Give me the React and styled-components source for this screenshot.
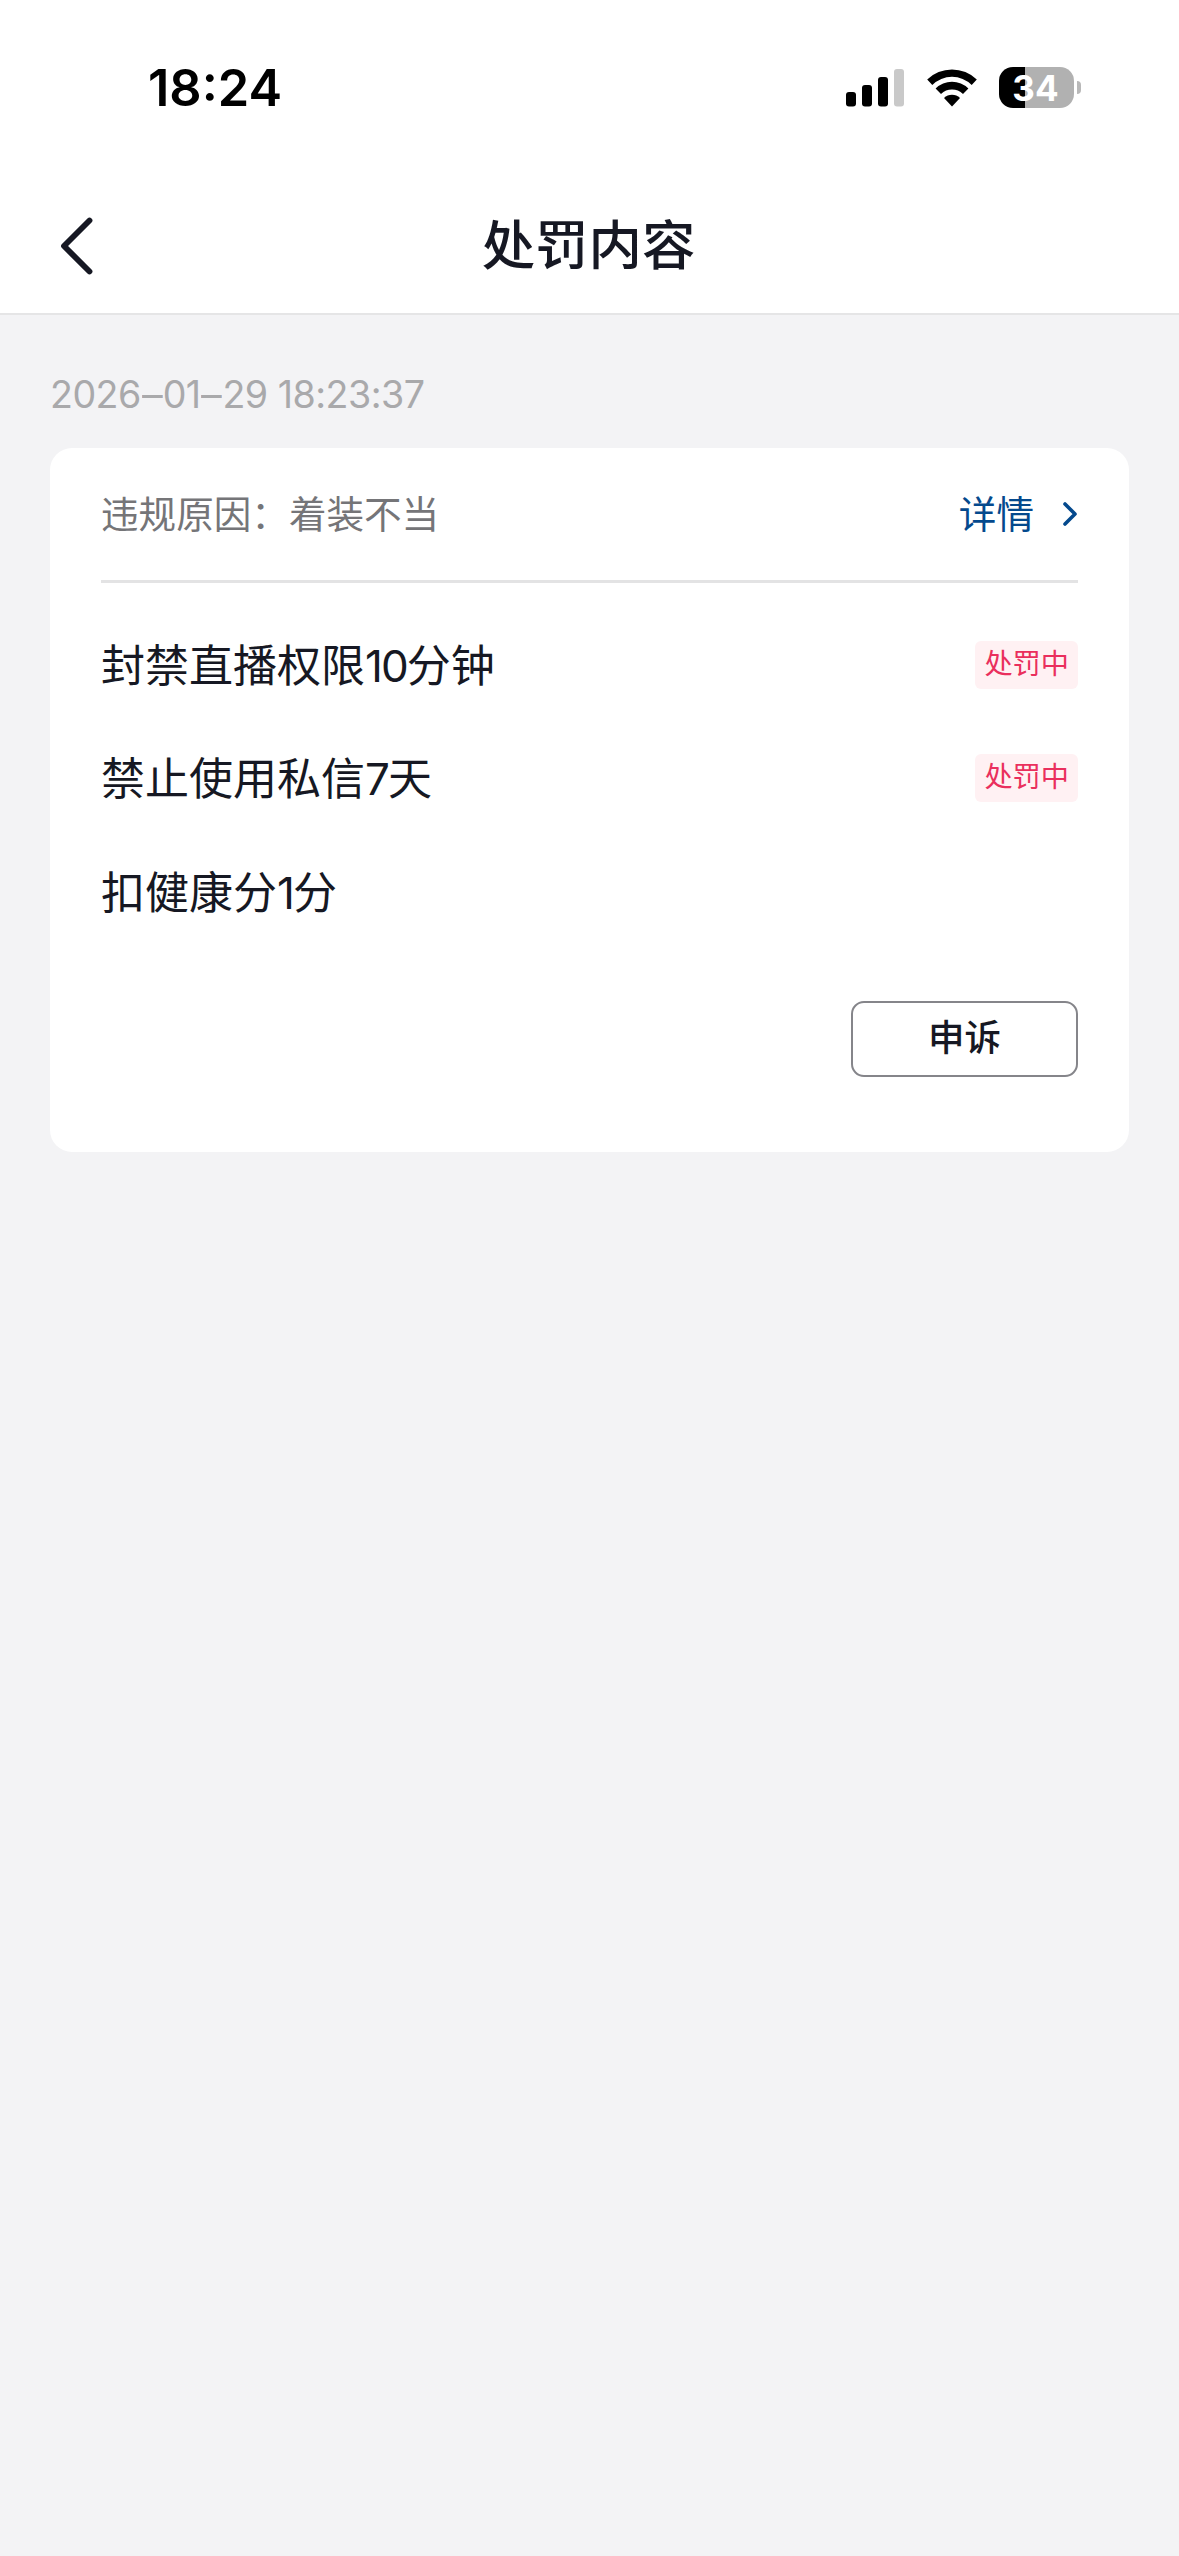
import React from 'react';
import styled, { createGlobalStyle } from 'styled-components';

const GlobalStyle = createGlobalStyle`
    * {
        box-sizing: border-box;
    }
    body {
        margin: 0;
        background: #f3f3f5;
        font-family: Inter, 'Noto Sans CJK SC', sans-serif;
        color: #161823;
    }
`

const penalties = [
    { id: 1, text: ['封禁直播权限', '10', '分钟'], status: '处罚中' },
    { id: 2, text: ['禁止使用私信', '7', '天'], status: '处罚中' },
    { id: 3, text: ['扣健康分', '1', '分'] }
];

function SignalIcon() {
    return (
        <svg width='58' height='38' viewBox='0 0 58 38'>
            <rect x='0' y='23' width='10' height='14.5' rx='3' fill='#000' />
            <rect x='16' y='16' width='10' height='21.5' rx='3' fill='#000' />
            <rect x='32' y='8' width='10' height='29.5' rx='3' fill='#000' />
            <rect x='48' y='0' width='10' height='37.5' rx='3' fill='#c9c9c9' />
        </svg>
    );
}

function WifiIcon() {
    return (
        <svg width='50' height='38' viewBox='0 0 50 38'>
            <path d='M0.2 10.6 A35.5 35.5 0 0 1 49.8 10.6 L44.7 15.9 A28 28 0 0 0 5.3 15.9 Z' />
            <path d='M8.6 19.5 A23.4 23.4 0 0 1 41.4 19.5 L36 24.9 A16 16 0 0 0 14 24.9 Z' />
            <path d='M17 29 A11.6 11.6 0 0 1 33 29 L25 37.4 Z' />
        </svg>
    );
}

function App() {
    return (
        <Page>
            <GlobalStyle />
            <StatusBar>
                <Clock>18:24</Clock>
                <StatusIcons>
                    <SignalIcon />
                    <WifiIcon />
                    <Battery>
                        <BatteryBody>34</BatteryBody>
                        <BatteryTip />
                    </Battery>
                </StatusIcons>
            </StatusBar>
            <NavBar>
                <BackButton aria-label='返回'>
                    <svg width='36' height='60' viewBox='0 0 36 60'>
                        <path d='M30.5 4.5 L5 30 L30.5 55.5' />
                    </svg>
                </BackButton>
                <Title>处罚内容</Title>
            </NavBar>
            <Content>
                <Time>2026<Dash>–</Dash>01<Dash>–</Dash>29 18:23:37</Time>
                <Card>
                    <Reason>
                        <ReasonText>违规原因：着装不当</ReasonText>
                        <DetailLink>
                            <ReasonText>详情</ReasonText>
                            <svg width='18' height='28' viewBox='0 0 18 28'>
                                <path d='M5 4 L15 14 L5 24' />
                            </svg>
                        </DetailLink>
                    </Reason>
                    <PenaltyList>
                        {penalties.map(item => (
                            <Penalty key={item.id}>
                                <PenaltyText>
                                    {item.text[0]}
                                    <Num>{item.text[1]}</Num>
                                    {item.text[2]}
                                </PenaltyText>
                                {item.status && <Tag>{item.status}</Tag>}
                            </Penalty>
                        ))}
                    </PenaltyList>
                    <AppealButton>申诉</AppealButton>
                </Card>
            </Content>
        </Page>
    );
}

const Page = styled.div`
    display: flex;
    flex-direction: column;
    min-height: 2556px;
`

const StatusBar = styled.header`
    display: flex;
    align-items: center;
    justify-content: space-between;
    height: 175px;
    padding: 0 98px 0 148px;
    background: #fff;
`

const Clock = styled.div`
    color: #000;
    font-size: 50.5px;
    font-weight: 600;
    line-height: 60px;
`

const StatusIcons = styled.div`
    display: flex;
    align-items: center;
    gap: 22.5px;
    svg {
        display: block;
    }
`

const Battery = styled.div`
    display: flex;
    align-items: center;
    gap: 3px;
`

const BatteryBody = styled.div`
    width: 75px;
    height: 41px;
    padding-right: 2px;
    border-radius: 14px;
    background: linear-gradient(to right, #000 26px, #b1b1b1 26px);
    color: #fff;
    font-size: 35px;
    font-weight: 700;
    line-height: 42px;
    text-align: center;
`

const BatteryTip = styled.div`
    width: 4px;
    height: 13px;
    border-radius: 0 4px 4px 0;
    background: #b8b8b8;
`

const NavBar = styled.nav`
    display: grid;
    grid-template-columns: 120px 1fr 122px;
    align-items: center;
    height: 140px;
    padding-top: 4px;
    border-bottom: 2px solid #e5e5e6;
    background: #fff;
`

const BackButton = styled.button`
    display: flex;
    padding: 0 0 0 59px;
    border: none;
    background: none;
    path {
        fill: none;
        stroke: #161823;
        stroke-width: 5.8;
        stroke-linecap: round;
        stroke-linejoin: round;
    }
`

const Title = styled.h1`
    margin: 0;
    font-size: 53.4px;
    font-weight: 500;
    line-height: 76px;
    text-align: center;
`

const Content = styled.main`
    padding: 56px 50px 0;
`

const Time = styled.div`
    height: 77px;
    color: #a9a9ab;
    font-size: 37.6px;
    font-weight: 400;
    letter-spacing: -0.5px;
    line-height: 48px;
`

const Dash = styled.span`
    display: inline-block;
    margin: 0 1.75px;
    transform: scaleX(1.1);
`

const Card = styled.section`
    display: flex;
    flex-direction: column;
    height: 704px;
    padding: 0 51px;
    border-radius: 22px;
    background: #fff;
`

const Reason = styled.div`
    display: flex;
    align-items: center;
    justify-content: space-between;
    height: 135px;
    border-bottom: 3px solid #e3e3e4;
    color: #757578;
    font-size: 37.6px;
`

const ReasonText = styled.span`
    padding-bottom: 6px;
`

const DetailLink = styled.a`
    display: flex;
    align-items: center;
    gap: 26px;
    color: #04498d;
    path {
        fill: none;
        stroke: #04498d;
        stroke-width: 3.6;
        stroke-linecap: round;
        stroke-linejoin: round;
    }
`

const PenaltyList = styled.ul`
    display: grid;
    grid-auto-rows: 64px;
    row-gap: 49.4px;
    margin: 0;
    padding: 50px 0 0;
    list-style: none;
`

const Penalty = styled.li`
    display: flex;
    align-items: center;
    justify-content: space-between;
    font-size: 44px;
`

const PenaltyText = styled.span`
    padding-bottom: 4px;
`

const Num = styled.span`
    letter-spacing: -2px;
`

const Tag = styled.span`
    height: 48px;
    padding: 0 9px;
    border-radius: 6px;
    background: #fff1f3;
    color: #ea2f5d;
    font-size: 28.2px;
    line-height: 46px;
`

const AppealButton = styled.button`
    align-self: flex-end;
    width: 227px;
    height: 76px;
    margin-top: 77px;
    padding: 0 0 6px;
    border: 2px solid #85858a;
    border-radius: 13px;
    background: #fff;
    color: #161823;
    font-family: inherit;
    font-size: 36.5px;
    font-weight: 500;
`

export default App;
